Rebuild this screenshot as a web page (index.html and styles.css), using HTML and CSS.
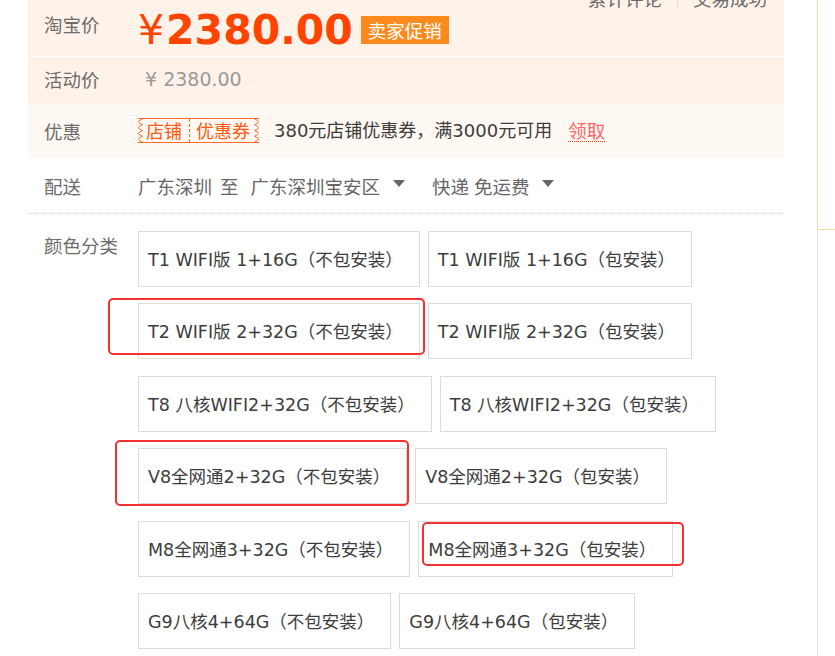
FILE: index.html
```html
<!DOCTYPE html>
<html lang="zh-CN">
<head>
<meta charset="utf-8">
<title>商品详情</title>
<link rel="stylesheet" href="styles.css">
</head>
<body>
<div class="page">
  <div class="main">
    <div class="summary">
      <div class="row row-price">
        <div class="label">淘宝价</div>
        <div class="price"><span class="rmb">¥</span><span class="num">2380.00</span><span class="tag">卖家促销</span></div>
        <div class="meta"><span class="meta-item">累计评论</span><span class="meta-item sep">交易成功</span></div>
      </div>
      <div class="row row-promo">
        <div class="label">活动价</div>
        <div class="promo-price">¥ 2380.00</div>
      </div>
    </div>
    <div class="row row-coupon">
      <div class="label">优惠</div>
      <div class="coupon">
        <svg class="wave" viewBox="0 0 5 23"><path d="M4.5 0 Q-3.5 2.9 4.5 5.75 Q-3.5 8.6 4.5 11.5 Q-3.5 14.4 4.5 17.25 Q-3.5 20.1 4.5 23" fill="none" stroke="#ff6a28" stroke-width="1"/></svg>
        <span class="coupon-shop">店铺</span>
        <span class="coupon-type">优惠券</span>
        <svg class="wave" viewBox="0 0 5 23"><path d="M0.5 0 Q8.5 2.9 0.5 5.75 Q8.5 8.6 0.5 11.5 Q8.5 14.4 0.5 17.25 Q8.5 20.1 0.5 23" fill="none" stroke="#ff6a28" stroke-width="1"/></svg>
      </div>
      <span class="coupon-desc">380元店铺优惠券，满3000元可用</span>
      <a class="coupon-get">领取</a>
    </div>
    <div class="row row-ship">
      <div class="label">配送</div>
      <div class="ship">
        <span>广东深圳</span>
        <span class="ship-to">至</span>
        <span>广东深圳宝安区</span>
        <i class="caret"></i>
        <span class="ship-way">快递</span>
        <span class="ship-fee">免运费</span>
        <i class="caret caret-2"></i>
      </div>
    </div>
    <div class="row row-sku">
      <div class="label">颜色分类</div>
      <div class="sku-list">
        <span class="sku">T1 WIFI版 1+16G（不包安装）</span>
        <span class="sku">T1 WIFI版 1+16G（包安装）</span>
        <span class="sku">T2 WIFI版 2+32G（不包安装）</span>
        <span class="sku">T2 WIFI版 2+32G（包安装）</span>
        <span class="sku">T8 八核WIFI2+32G（不包安装）</span>
        <span class="sku">T8 八核WIFI2+32G（包安装）</span>
        <span class="sku">V8全网通2+32G（不包安装）</span>
        <span class="sku">V8全网通2+32G（包安装）</span>
        <span class="sku">M8全网通3+32G（不包安装）</span>
        <span class="sku">M8全网通3+32G（包安装）</span>
        <span class="sku">G9八核4+64G（不包安装）</span>
        <span class="sku">G9八核4+64G（包安装）</span>
      </div>
    </div>
  </div>
  <div class="side"><div class="side-box"></div></div>
  <div class="mark mark-1"></div>
  <div class="mark mark-2"></div>
  <div class="mark mark-3"></div>
</div>
</body>
</html>
```
FILE: styles.css
```css
html, body {
  margin: 0;
  padding: 0;
  background: #fff;
}
body {
  font-family: "Noto Sans CJK SC", sans-serif;
}
.page {
  position: relative;
  display: flex;
  height: 656px;
  overflow: hidden;
}
.main {
  margin-left: 28px;
  width: 756px;
  flex-shrink: 0;
}
.side {
  margin-left: 33px;
  flex: 1;
  border-left: 1px solid #e6e6e6;
}
.side-box {
  height: 230px;
  box-sizing: border-box;
  margin-left: -1px;
  border-left: 1px solid #f6d9a4;
  border-bottom: 1px solid #f6d9a4;
}

.summary {
  background: #fff2e8;
}
.row {
  display: flex;
}
.label {
  width: 110px;
  padding-left: 16px;
  box-sizing: border-box;
  flex-shrink: 0;
  font-size: 18.5px;
  line-height: 20px;
  color: #6c6c6c;
  white-space: nowrap;
}

/* price row */
.row-price {
  height: 56px;
  border-bottom: 1px solid #fff;
  align-items: flex-start;
}
.row-price .label {
  margin-top: 14px;
}
.price {
  margin-top: 10px;
  font-family: "DejaVu Sans", sans-serif;
  font-size: 41px;
  line-height: 41px;
  color: #ff4400;
  white-space: nowrap;
}
.rmb {
  margin-right: 2px;
}
.num {
  font-weight: bold;
}
.tag {
  display: inline-block;
  overflow: hidden;
  vertical-align: baseline;
  height: 28px;
  line-height: 28px;
  margin-left: 8px;
  padding: 0 7px;
  background: #fd8a1c;
  color: #fff;
  font-family: "Noto Sans CJK SC", sans-serif;
  font-size: 18.5px;
}
.meta {
  margin-left: auto;
  margin-right: 17px;
  margin-top: -13px;
  display: flex;
  font-size: 18.5px;
  line-height: 23px;
  color: #6c6c6c;
}
.meta-item {
  padding-right: 15px;
}
.meta-item.sep {
  padding-right: 0;
  padding-left: 15px;
  border-left: 1px solid #f0d9c8;
}

/* promo row */
.row-promo {
  height: 46px;
  align-items: flex-start;
}
.row-promo .label {
  margin-top: 12px;
}
.promo-price {
  margin-top: 12px;
  padding-left: 7px;
  font-family: "DejaVu Sans", sans-serif;
  font-size: 19px;
  line-height: 20px;
  color: #9a9a9a;
}

/* coupon row */
.row-coupon {
  height: 55px;
  align-items: center;
  background: #fff8f3;
}
.coupon {
  display: flex;
  align-items: center;
  height: 25px;
  box-sizing: border-box;
  border-top: 1px solid #ff6a28;
  border-bottom: 1px solid #ff6a28;
  color: #ff5a10;
  font-size: 18px;
  line-height: 23px;
}
.wave {
  display: block;
  width: 5px;
  height: 23px;
}
.coupon-shop {
  padding: 0 7px 0 3px;
}
.coupon-type {
  padding: 0 4px 0 6px;
  border-left: 1px dashed #ff6a28;
}
.coupon-desc {
  margin-left: 15px;
  font-family: "DejaVu Sans", "Noto Sans CJK SC", sans-serif;
  font-size: 18px;
  line-height: 20px;
  color: #3c3c3c;
}
.coupon-get {
  margin-left: 16px;
  font-size: 18.5px;
  line-height: 20px;
  padding-bottom: 1px;
  color: #ff6666;
  border-bottom: 1px dotted #ff4400;
}

/* shipping row */
.row-ship {
  height: 56px;
  box-sizing: border-box;
  border-bottom: 1px dotted #d6d6d6;
  align-items: center;
}
.ship {
  display: flex;
  align-items: center;
  font-size: 18.5px;
  line-height: 20px;
  color: #666;
  white-space: nowrap;
}
.ship-to {
  margin: 0 12px 0 8px;
}
.caret {
  width: 0;
  height: 0;
  margin-left: 13px;
  margin-bottom: 5px;
  border-left: 6px solid transparent;
  border-right: 6px solid transparent;
  border-top: 7px solid #666;
}
.ship-way {
  margin-left: 27px;
}
.ship-fee {
  margin-left: 5px;
}
.caret-2 {
  margin-left: 12px;
}

/* sku row */
.row-sku {
  padding-top: 17px;
  align-items: flex-start;
}
.row-sku .label {
  margin-top: 4px;
}
.sku-list {
  display: flex;
  flex-wrap: wrap;
  column-gap: 8px;
  row-gap: 16.4px;
  width: 646px;
}
.sku {
  height: 56px;
  box-sizing: border-box;
  border: 1px solid #dcdcdc;
  padding: 2px 16px 0 9px;
  line-height: 52px;
  font-family: "DejaVu Sans", "Noto Sans CJK SC", sans-serif;
  font-size: 17.5px;
  color: #3c3c3c;
  white-space: nowrap;
  background: #fff;
}

/* red annotation boxes drawn over the screenshot */
.mark {
  position: absolute;
  box-sizing: border-box;
  border: 2px solid #f53030;
  border-radius: 5px;
}
.mark-1 {
  left: 108px;
  top: 298px;
  width: 317px;
  height: 57px;
}
.mark-2 {
  left: 115px;
  top: 440px;
  width: 294px;
  height: 66px;
}
.mark-3 {
  left: 422px;
  top: 522px;
  width: 262px;
  height: 44px;
}
```
